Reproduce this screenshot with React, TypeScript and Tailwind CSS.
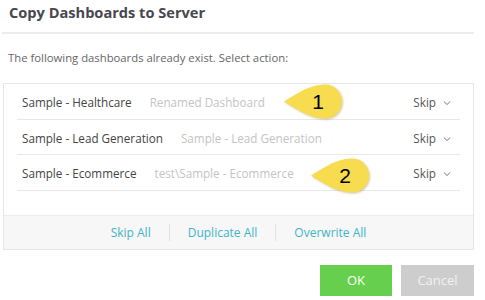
import React from "react";

function Callout({ n, className }: { n: string; className: string }) {
  return (
    <div className={`absolute w-[62px] h-[38px] ${className}`}>
      <svg width="62" height="38" viewBox="0 0 62 38" className="absolute inset-0" style={{ filter: "drop-shadow(1px 1px 1px rgba(120,100,0,0.35))" }}>
        <path d="M2 18.5 C 16 10 28 1.5 43 1.5 A 17 17 0 1 1 43 35.5 C 28 35.5 16 27 2 18.5 Z" fill="#f8dc50" />
      </svg>
      <span className="absolute left-[21px] top-0 w-[30px] h-[37px] flex items-center justify-center text-[21px] text-black font-['Liberation_Sans',sans-serif]">
        {n}
      </span>
    </div>
  );
}

function Row({ name, target }: { name: string; target: string }) {
  return (
    <div className="h-[35.7px] mx-[13px] border-b border-[#e8e8e8] flex items-center pt-[3px] pl-[5px] pr-[9px] text-[11.7px]">
      <span className="text-[#444]">{name}</span>
      <span className="ml-[18px] text-[#c4c4c4]">{target}</span>
      <span className="ml-auto flex items-center text-[#555]">
        Skip
        <svg width="8" height="6" viewBox="0 0 8 6" className="ml-[7px]">
          <path d="M0.8 1.5 L4 4.5 L7.2 1.5" fill="none" stroke="#777" strokeWidth="1" />
        </svg>
      </span>
    </div>
  );
}

export default function App() {
  return (
    <div className="w-[485px] h-[300px] bg-white relative overflow-hidden font-['Open_Sans',sans-serif]">
      <div className="h-[32px] pl-[9px] pt-[1px] leading-[22px] text-[14.6px] font-bold text-[#474750]">
        Copy Dashboards to Server
      </div>
      <div className="ml-[2px] w-[472px] h-[2px] bg-[#ececec]" />
      <div className="pl-[8px] pt-[16px] h-[49px] text-[11.3px] text-[#666]">
        The following dashboards already exist. Select action:
      </div>
      <div className="ml-[3px] w-[471px] h-[167px] border border-[#e6e6e6] flex flex-col">
        <Row name="Sample - Healthcare" target="Renamed Dashboard" />
        <Row name="Sample - Lead Generation" target="Sample - Lead Generation" />
        <Row name="Sample - Ecommerce" target="test\Sample - Ecommerce" />
        <div className="flex-1" />
        <div className="h-[34px] bg-[#f7f7f7] border-t border-[#ececec] flex items-center justify-center text-[12px] text-[#3bb6c8]">
          <span>Skip All</span>
          <div className="mx-[18px] w-px h-[17px] bg-[#e2e2e2]" />
          <span>Duplicate All</span>
          <div className="mx-[18px] w-px h-[17px] bg-[#e2e2e2]" />
          <span>Overwrite All</span>
        </div>
      </div>
      <div className="flex justify-end gap-[9px] pr-[11px] mt-[15px]">
        <div className="w-[72px] h-[31px] bg-[#66cf4d] text-white text-[13px] flex items-center justify-center">OK</div>
        <div className="w-[73px] h-[31px] bg-[#cdcdcd] text-[#f2f2f2] text-[13px] flex items-center justify-center">Cancel</div>
      </div>
      <Callout n="1" className="left-[282px] top-[83px]" />
      <Callout n="2" className="left-[309px] top-[157px]" />
    </div>
  );
}
